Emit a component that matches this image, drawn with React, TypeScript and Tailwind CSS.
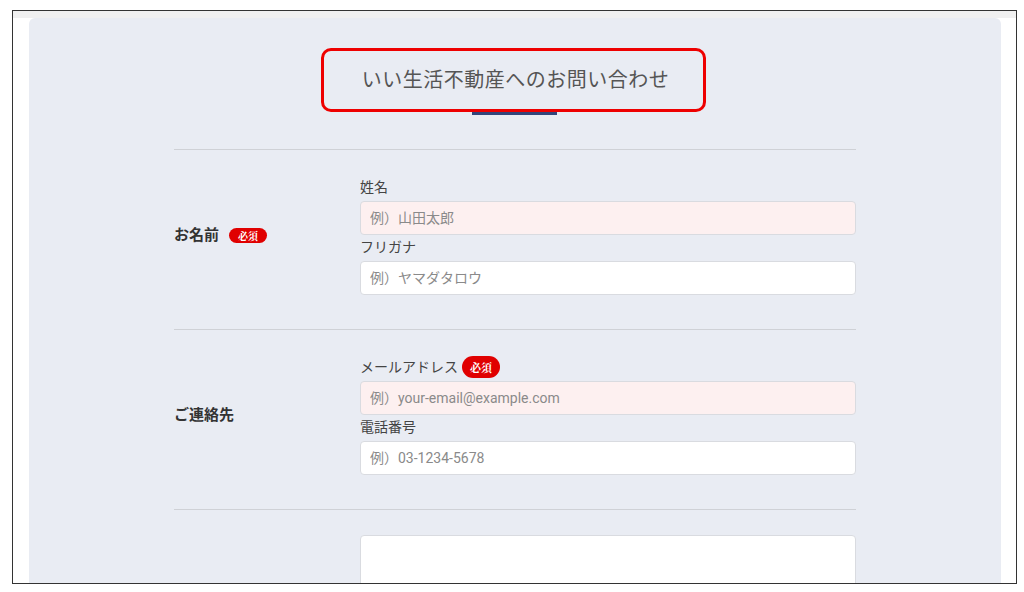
import React from 'react';

const font = { fontFamily: 'Roboto, "Noto Sans CJK JP", sans-serif' };

interface FieldProps {
    label: string;
    placeholder: string;
    required?: boolean;
    pink?: boolean;
}

const Badge: React.FC<{ big?: boolean }> = ({ big }) => (
    <span
        className={
            big
                ? 'ml-[4px] inline-flex h-[22px] w-[38px] items-center justify-center rounded-full bg-[#e00000] text-[11px] font-bold text-white'
                : 'ml-[10px] inline-flex h-[15px] w-[38px] items-center justify-center rounded-full bg-[#e00000] text-[10px] font-bold text-white'
        }
        style={{ fontFamily: '"Noto Serif CJK JP", "Noto Sans CJK JP", serif' }}
    >
        必須
    </span>
);

const Field: React.FC<FieldProps> = ({ label, placeholder, required, pink }) => (
    <div>
        <div className="flex h-6 items-center text-[14px] leading-6 text-[#444]">
            {label}
            {required && <Badge big />}
        </div>
        <input
            readOnly
            placeholder={placeholder}
            className={`mt-0.5 block h-[34px] w-full rounded-[4px] border border-[#d9dbe0] px-[9px] text-[14px] outline-none placeholder:text-[#8a8a8a] ${pink ? 'bg-[#fdf0f0]' : 'bg-white'}`}
            style={font}
        />
    </div>
);

const Section: React.FC<{ title: string; required?: boolean; children: React.ReactNode }> = ({
    title,
    required,
    children
}) => (
    <div className="flex items-center border-t border-[#cfd1d6] pt-[25px] pb-[34px]">
        <div className="flex w-[186px] shrink-0 items-center text-[15px] font-bold text-[#333]">
            {title}
            {required && <Badge />}
        </div>
        <div className="flex-1">{children}</div>
    </div>
);

export default function App() {
    return (
        <div className="h-[592px] w-[1024px] overflow-hidden bg-white pt-[10px] pl-[12px]" style={font}>
            <div className="flex h-[574px] w-[1005px] flex-col overflow-hidden border border-[#333]">
                <div className="h-[7px] shrink-0 bg-[#f0f0f0]" />
                <div className="flex flex-1 pl-[16px]">
                    <div className="w-[972px] rounded-t-[6px] bg-[#e9ecf3] pt-[30px]">
                        {/* heading */}
                        <div className="ml-[292px] flex h-[64px] w-[385px] items-center justify-center rounded-[10px] border-[3px] border-[#ee0000]">
                            <h1 className="pl-[4px] text-[20px] tracking-[0.5px] text-[#555]">いい生活不動産へのお問い合わせ</h1>
                        </div>
                        <div className="ml-[443px] h-[3px] w-[85px] bg-[#34457a]" />

                        <div className="mx-auto mt-[34px] w-[682px]">
                            <Section title="お名前" required>
                                <Field label="姓名" placeholder="例）山田太郎" pink />
                                <Field label="フリガナ" placeholder="例）ヤマダタロウ" />
                            </Section>
                            <Section title="ご連絡先">
                                <Field label="メールアドレス" placeholder="例）your-email@example.com" required pink />
                                <Field label="電話番号" placeholder="例）03-1234-5678" />
                            </Section>
                            <div className="flex border-t border-[#cfd1d6] pt-[25px]">
                                <div className="w-[186px] shrink-0" />
                                <textarea
                                    readOnly
                                    className="block h-[120px] flex-1 resize-none rounded-[4px] border border-[#d9dbe0] bg-white outline-none"
                                />
                            </div>
                        </div>
                    </div>
                </div>
            </div>
        </div>
    );
}
